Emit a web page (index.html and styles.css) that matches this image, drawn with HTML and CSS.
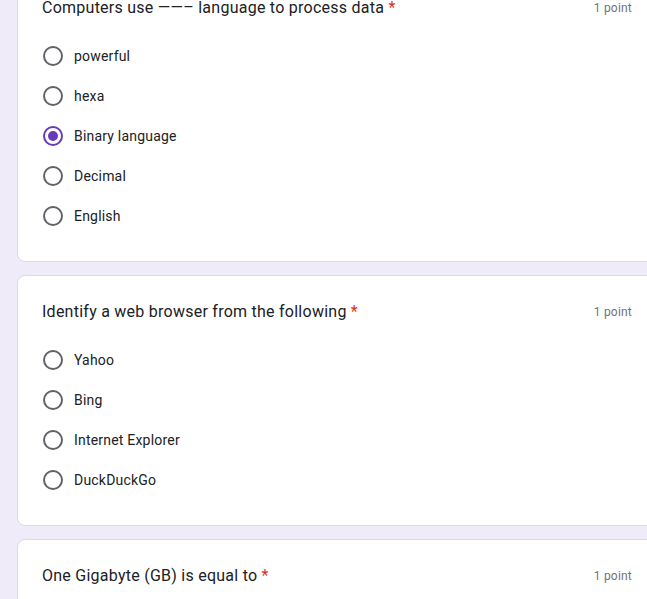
FILE: index.html
```html
<!DOCTYPE html>
<html>
<head>
<meta charset="utf-8">
<link rel="stylesheet" href="styles.css">
</head>
<body>
<div class="form">
  <div class="card">
    <div class="q-head">
      <div class="q-title">Computers use ——– language to process data <span class="req">*</span></div>
      <div class="points">1 point</div>
    </div>
    <div class="options">
      <div class="opt"><span class="radio"></span><span class="label">powerful</span></div>
      <div class="opt"><span class="radio"></span><span class="label">hexa</span></div>
      <div class="opt"><span class="radio checked"></span><span class="label">Binary language</span></div>
      <div class="opt"><span class="radio"></span><span class="label">Decimal</span></div>
      <div class="opt"><span class="radio"></span><span class="label">English</span></div>
    </div>
  </div>
  <div class="card">
    <div class="q-head">
      <div class="q-title">Identify a web browser from the following <span class="req">*</span></div>
      <div class="points">1 point</div>
    </div>
    <div class="options">
      <div class="opt"><span class="radio"></span><span class="label">Yahoo</span></div>
      <div class="opt"><span class="radio"></span><span class="label">Bing</span></div>
      <div class="opt"><span class="radio"></span><span class="label">Internet Explorer</span></div>
      <div class="opt"><span class="radio"></span><span class="label">DuckDuckGo</span></div>
    </div>
  </div>
  <div class="card">
    <div class="q-head">
      <div class="q-title">One Gigabyte (GB) is equal to <span class="req">*</span></div>
      <div class="points">1 point</div>
    </div>
  </div>
</div>
</body>
</html>
```
FILE: styles.css
```css
html, body {
  margin: 0;
  padding: 0;
  background: #f0ebf8;
  overflow: hidden;
  height: 599px;
}
body {
  font-family: Roboto, "Liberation Sans", Arial, sans-serif;
  color: #202124;
}
.form {
  margin-top: -29px;
  padding-left: 17px;
  width: 660px;
}
.card {
  background: #fff;
  border: 1px solid #dadce0;
  border-radius: 8px;
  padding: 24px 24px 25px 24px;
  margin-bottom: 13px;
}
.q-head {
  display: flex;
  justify-content: space-between;
  align-items: center;
  height: 24px;
  padding-right: 20px;
}
.q-title {
  font-size: 16px;
  line-height: 24px;
  letter-spacing: 0.25px;
  color: #202124;
}
.req {
  color: #d93025;
}
.points {
  font-size: 12px;
  color: #70757a;
  letter-spacing: 0.2px;
}
.options {
  margin-top: 16px;
  display: flex;
  flex-direction: column;
}
.opt {
  display: flex;
  align-items: center;
  height: 40px;
}
.radio {
  box-sizing: border-box;
  width: 20px;
  height: 20px;
  border: 2px solid #5f6368;
  border-radius: 50%;
  margin-left: 1px;
  display: flex;
  align-items: center;
  justify-content: center;
}
.radio.checked {
  border-color: #673ab7;
}
.radio.checked::after {
  content: "";
  width: 10px;
  height: 10px;
  border-radius: 50%;
  background: #673ab7;
}
.label {
  font-size: 14px;
  letter-spacing: 0.2px;
  margin-left: 11px;
  color: #202124;
}
```
